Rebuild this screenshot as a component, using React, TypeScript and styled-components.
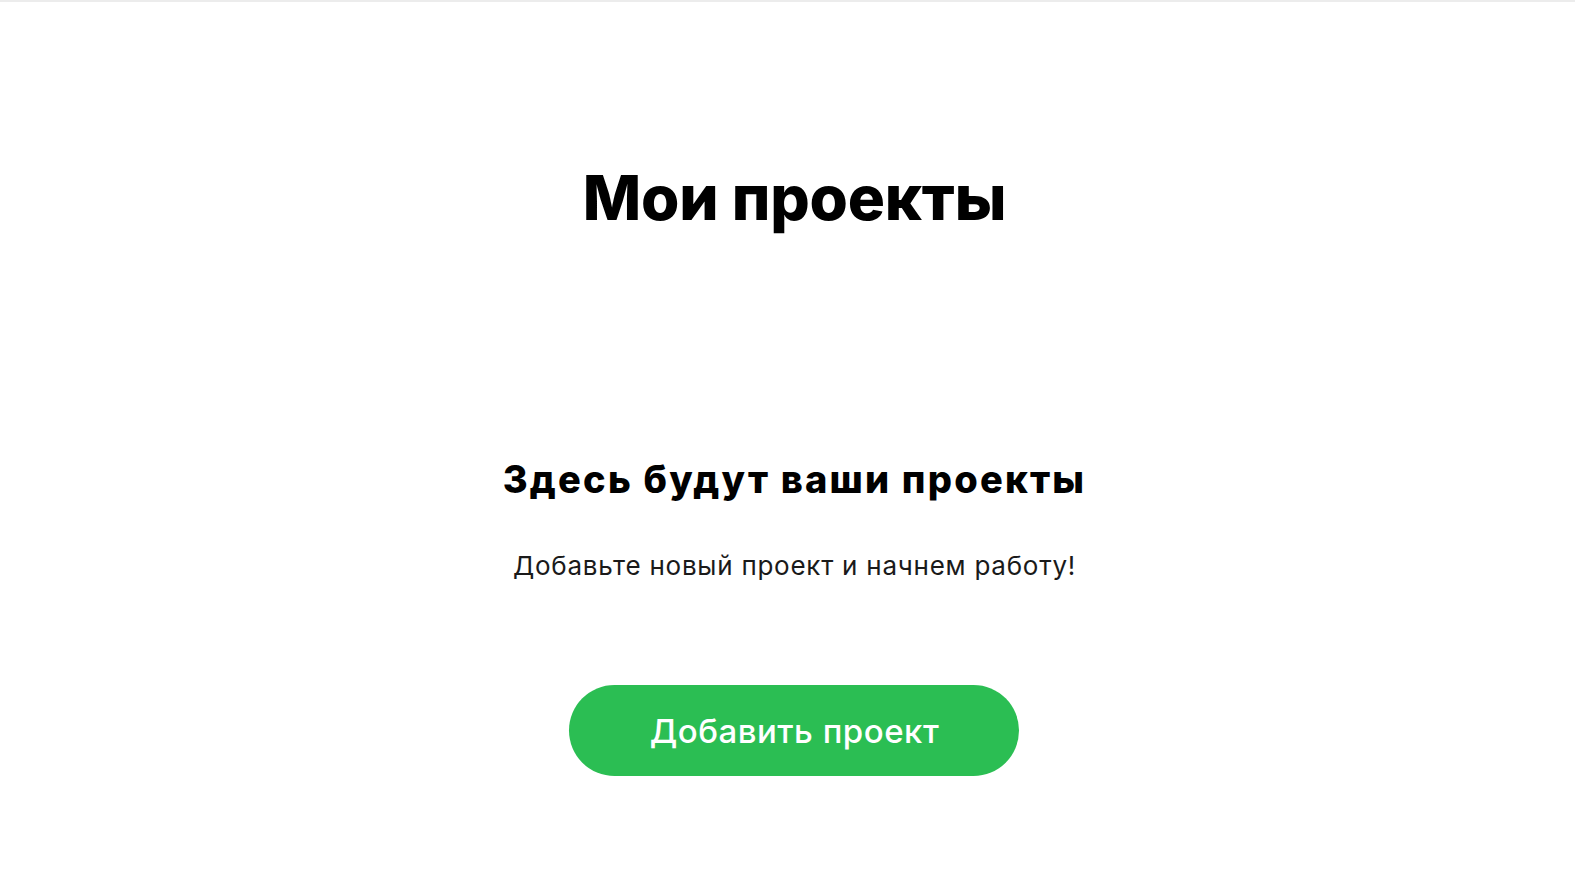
import styled, { createGlobalStyle } from "styled-components";

const GlobalStyle = createGlobalStyle`
    html, body {
        margin: 0;
        padding: 0;
        background: #ffffff;
    }
    body {
        font-family: Inter, Roboto, "Noto Sans", "Liberation Sans", sans-serif;
        color: #111;
    }
`

export default function App() {
    return (
        <>
            <GlobalStyle />
            <Page>
                <Title>Мои проекты</Title>
                <Empty>
                    <EmptyTitle>Здесь будут ваши проекты</EmptyTitle>
                    <EmptyText>Добавьте новый проект и начнем работу!</EmptyText>
                    <AddButton type="button">Добавить проект</AddButton>
                </Empty>
            </Page>
        </>
    )
}

const Page = styled.div`
    min-height: 100vh;
    box-sizing: border-box;
    border-top: 2px solid #ececec;
    padding-left: 14px;
    display: flex;
    flex-direction: column;
    align-items: center;
`

const Title = styled.h1`
    margin: 165px 0 0;
    font-size: 62px;
    line-height: 1;
    font-weight: 800;
    letter-spacing: -0.2px;
    color: #000;
`

const Empty = styled.div`
    display: flex;
    flex-direction: column;
    align-items: center;
    margin-top: 231px;
`

const EmptyTitle = styled.h2`
    margin: 0;
    font-size: 38px;
    line-height: 1;
    font-weight: 800;
    letter-spacing: 2.2px;
    color: #000;
`

const EmptyText = styled.p`
    margin: 55px 0 0;
    font-size: 26px;
    line-height: 1;
    font-weight: 400;
    letter-spacing: 0.75px;
    color: #1a1a1a;
`

const AddButton = styled.button`
    margin-top: 106px;
    width: 450px;
    height: 91px;
    border: none;
    border-radius: 46px;
    background: #2bbe53;
    color: #fff;
    font-family: inherit;
    font-size: 33px;
    font-weight: 500;
    letter-spacing: 0.5px;
    cursor: pointer;
`
